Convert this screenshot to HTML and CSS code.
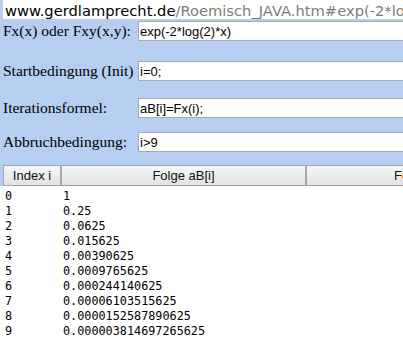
FILE: index.html
```html
<!DOCTYPE html>
<html lang="de">
<head>
<meta charset="utf-8">
<title>Roemisch JAVA</title>
<link rel="stylesheet" href="styles.css">
</head>
<body>
<div class="form">
  <div class="url"><span class="host">www.gerdlamprecht.de</span><span class="path">/Roemisch_JAVA.htm#exp(-2*log(2)*x)</span></div>
  <div class="row row-1">
    <label class="label">Fx(x) oder Fxy(x,y):</label>
    <input class="field" type="text" value="exp(-2*log(2)*x)">
  </div>
  <div class="row row-2">
    <label class="label">Startbedingung (Init)</label>
    <input class="field" type="text" value="i=0;">
  </div>
  <div class="row row-3">
    <label class="label">Iterationsformel:</label>
    <input class="field" type="text" value="aB[i]=Fx(i);">
  </div>
  <div class="row row-4">
    <label class="label">Abbruchbedingung:</label>
    <input class="field" type="text" value="i&gt;9">
  </div>
  <div class="thead">
    <div class="th th-index">Index i</div>
    <div class="th th-folge">Folge aB[i]</div>
    <div class="th th-more">Folge</div>
  </div>
</div>
<div class="output">
  <div class="line"><span class="idx">0</span><span class="val">1</span></div>
  <div class="line"><span class="idx">1</span><span class="val">0.25</span></div>
  <div class="line"><span class="idx">2</span><span class="val">0.0625</span></div>
  <div class="line"><span class="idx">3</span><span class="val">0.015625</span></div>
  <div class="line"><span class="idx">4</span><span class="val">0.00390625</span></div>
  <div class="line"><span class="idx">5</span><span class="val">0.0009765625</span></div>
  <div class="line"><span class="idx">6</span><span class="val">0.000244140625</span></div>
  <div class="line"><span class="idx">7</span><span class="val">0.00006103515625</span></div>
  <div class="line"><span class="idx">8</span><span class="val">0.0000152587890625</span></div>
  <div class="line"><span class="idx">9</span><span class="val">0.000003814697265625</span></div>
</div>
</body>
</html>
```
FILE: styles.css
```css
html, body {
  margin: 0;
  padding: 0;
  overflow: hidden;
  background: #ffffff;
}
body {
  width: 403px;
  height: 339px;
  font-family: "Liberation Serif", "Times New Roman", serif;
}
.form {
  background: #b5cef1;
  padding-left: 3px;
  overflow: hidden;
}
.url {
  box-sizing: border-box;
  height: 19px;
  padding: 3px 0 0 2px;
  background: #ffffff;
  font-family: "DejaVu Sans", Verdana, sans-serif;
  font-size: 14.7px;
  line-height: 16px;
  white-space: nowrap;
  overflow: hidden;
  width: 600px;
}
.host { color: #000000; }
.path { color: #7d7d7d; }
.row {
  display: flex;
  align-items: center;
  height: 20px;
}
.row-1 { margin-top: 2px; }
.row-2 { margin-top: 20px; }
.row-3 { margin-top: 17px; }
.row-4 { margin-top: 14px; }
.label {
  flex: none;
  width: 135px;
  font-size: 15.5px;
  color: #000000;
  white-space: nowrap;
}
.field {
  flex: none;
  box-sizing: border-box;
  width: 320px;
  height: 20px;
  margin: 0;
  padding: 0 0 0 1px;
  border: 1px solid #a9a9a9;
  background: #ffffff;
  font-family: "Liberation Sans", Arial, sans-serif;
  font-size: 13px;
  color: #000000;
  outline: none;
}
.thead {
  display: flex;
  margin-top: 13px;
  height: 21px;
  box-sizing: border-box;
  border-top: 1px solid #a3a3a3;
  border-bottom: 1px solid #a0a0a0;
  border-left: 1px solid #a3a3a3;
  width: 700px;
}
.th {
  flex: none;
  box-sizing: border-box;
  height: 19px;
  line-height: 19px;
  background: linear-gradient(#f7f7f7, #e2e2e2);
  font-family: "Liberation Sans", Arial, sans-serif;
  font-size: 13px;
  color: #111111;
  text-align: center;
  white-space: nowrap;
  border-right: 2px solid #a8a8a8;
}
.th-index { width: 58px; }
.th-folge { width: 245px; }
.th-more {
  width: 390px;
  text-align: left;
  padding-left: 87px;
  border-right: none;
}
.output {
  padding: 3px 0 0 5px;
  font-family: "DejaVu Sans Mono", Consolas, monospace;
  font-size: 11.8px;
  line-height: 15px;
  color: #000000;
}
.line {
  display: flex;
  white-space: nowrap;
}
.idx {
  flex: none;
  width: 58px;
}
.val {
  flex: none;
}
```
